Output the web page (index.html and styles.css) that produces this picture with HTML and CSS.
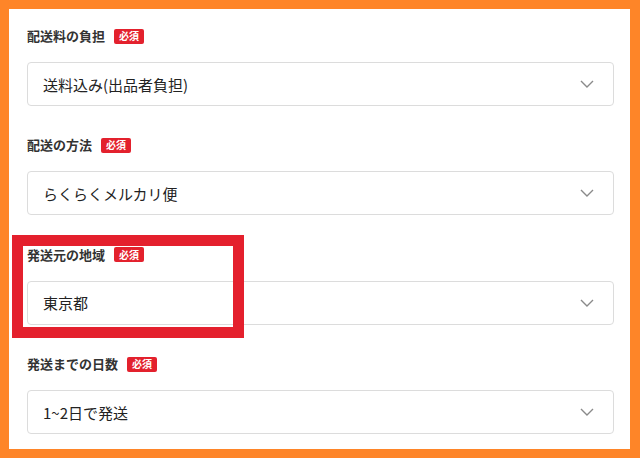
FILE: index.html
```html
<!DOCTYPE html>
<html lang="ja">
<head>
<meta charset="utf-8">
<link rel="stylesheet" href="styles.css">
</head>
<body>
<div class="panel">
  <div class="field">
    <div class="label">配送料の負担<span class="badge">必須</span></div>
    <div class="select"><span class="value">送料込み(出品者負担)</span><svg class="chev" width="14" height="8" viewBox="0 0 14 8"><path d="M1 1 L7 7 L13 1" fill="none" stroke="#8a8a8a" stroke-width="1.4"/></svg></div>
  </div>
  <div class="field">
    <div class="label">配送の方法<span class="badge">必須</span></div>
    <div class="select"><span class="value">らくらくメルカリ便</span><svg class="chev" width="14" height="8" viewBox="0 0 14 8"><path d="M1 1 L7 7 L13 1" fill="none" stroke="#8a8a8a" stroke-width="1.4"/></svg></div>
  </div>
  <div class="field">
    <div class="label">発送元の地域<span class="badge">必須</span></div>
    <div class="select"><span class="value">東京都</span><svg class="chev" width="14" height="8" viewBox="0 0 14 8"><path d="M1 1 L7 7 L13 1" fill="none" stroke="#8a8a8a" stroke-width="1.4"/></svg></div>
  </div>
  <div class="field">
    <div class="label">発送までの日数<span class="badge">必須</span></div>
    <div class="select"><span class="value">1~2日で発送</span><svg class="chev" width="14" height="8" viewBox="0 0 14 8"><path d="M1 1 L7 7 L13 1" fill="none" stroke="#8a8a8a" stroke-width="1.4"/></svg></div>
  </div>
  <div class="highlight"></div>
</div>
</body>
</html>
```
FILE: styles.css
```css
html, body {
  margin: 0;
  padding: 0;
}
body {
  background: #fe8528;
  width: 640px;
  height: 458px;
  overflow: hidden;
  font-family: "Noto Sans CJK JP", "Noto Sans", sans-serif;
  color: #222;
}
.panel {
  position: relative;
  margin: 9px 10px 0 9px;
  width: 621px;
  height: 440px;
  background: #fff;
  box-sizing: border-box;
  padding: 17px 16px 0 18px;
}
.field {
  margin-bottom: 29.4px;
}
.label {
  height: 20px;
  line-height: 20px;
  font-size: 13px;
  font-weight: 700;
  color: #333;
  display: flex;
  align-items: center;
  margin-bottom: 16px;
}
.badge {
  display: inline-flex;
  align-items: center;
  justify-content: center;
  margin-left: 9px;
  width: 30px;
  height: 15px;
  background: #e3212d;
  color: #fff;
  font-size: 10px;
  font-weight: 700;
  border-radius: 2px;
  line-height: 1;
}
.select {
  height: 44px;
  box-sizing: border-box;
  border: 1px solid #dcdcdc;
  border-radius: 4px;
  display: flex;
  align-items: center;
  justify-content: space-between;
  padding: 0 19px 0 15px;
}
.value {
  font-size: 15px;
  color: #222;
}
.chev {
  display: block;
}
.highlight {
  position: absolute;
  left: 3px;
  top: 226px;
  width: 232px;
  height: 103px;
  box-sizing: border-box;
  border: 11px solid #e4202d;
}
```
